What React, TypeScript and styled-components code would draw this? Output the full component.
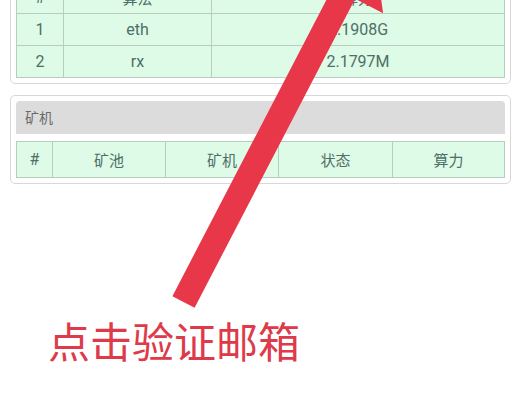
import React from "react";
import styled, { createGlobalStyle } from "styled-components";

const GlobalStyle = createGlobalStyle`
  html, body {
    margin: 0;
    padding: 0;
    background: #ffffff;
  }
  body {
    font-family: Roboto, "Noto Sans CJK SC", "Noto Sans", sans-serif;
  }
`;

const Page = styled.div`
  position: relative;
  width: 520px;
  height: 400px;
  overflow: hidden;
  background: #ffffff;
`;

const Card = styled.section<{ $offset: number }>`
  box-sizing: border-box;
  width: 501px;
  margin: ${(p) => p.$offset}px 9px 0 10px;
  border: 1px solid #d8d8d8;
  border-radius: 5px;
  padding: 5px;
  background: #ffffff;
  display: flex;
  flex-direction: column;
  gap: 7px;
`;

const CardHeader = styled.div`
  height: 33px;
  line-height: 33px;
  padding-left: 9px;
  background: #dcdcdc;
  border-radius: 4px 4px 0 0;
  font-family: "Noto Sans CJK SC", sans-serif;
  font-size: 14px;
  color: #6a6a6a;
`;

const Table = styled.table`
  width: 100%;
  border-collapse: collapse;
  table-layout: fixed;
  background: #ddfbe6;
`;

const Row = styled.tr<{ $h: number }>`
  height: ${(p) => p.$h}px;
`;

const Cell = styled.td<{ $cjk?: boolean }>`
  border: 1px solid #b9cdbf;
  padding: 0;
  text-align: center;
  vertical-align: middle;
  color: #4e6f67;
  font-family: ${(p) =>
    p.$cjk ? `"Noto Sans CJK SC", sans-serif` : `Roboto, "Noto Sans CJK SC", sans-serif`};
  font-size: ${(p) => (p.$cjk ? 15 : 16)}px;
  font-weight: 400;
`;

const Caption = styled.div`
  margin: 135px 0 0 48px;
  font-family: "Noto Sans CJK SC", sans-serif;
  font-size: 42px;
  line-height: 42px;
  color: #de3a49;
  white-space: nowrap;
`;

const ArrowLayer = styled.svg`
  position: absolute;
  left: 0;
  top: 0;
  width: 520px;
  height: 400px;
  pointer-events: none;
`;

const algos = [
  { id: "1", name: "eth", rate: "2.1908G" },
  { id: "2", name: "rx", rate: "2.1797M" },
];

export default function App() {
  return (
    <>
      <GlobalStyle />
      <Page>
        <Card $offset={-65}>
          <CardHeader>算法</CardHeader>
          <Table>
            <colgroup>
              <col style={{ width: 47 }} />
              <col style={{ width: 148 }} />
              <col />
            </colgroup>
            <tbody>
              <Row $h={32}>
                <Cell>#</Cell>
                <Cell $cjk>算法</Cell>
                <Cell $cjk>算力</Cell>
              </Row>
              {algos.map((a) => (
                <Row $h={32} key={a.id}>
                  <Cell>{a.id}</Cell>
                  <Cell>{a.name}</Cell>
                  <Cell>{a.rate}</Cell>
                </Row>
              ))}
            </tbody>
          </Table>
        </Card>
        <Card $offset={11}>
          <CardHeader>矿机</CardHeader>
          <Table>
            <colgroup>
              <col style={{ width: 36 }} />
              <col style={{ width: 113 }} />
              <col style={{ width: 113 }} />
              <col style={{ width: 114 }} />
              <col />
            </colgroup>
            <tbody>
              <Row $h={36}>
                <Cell>#</Cell>
                <Cell $cjk>矿池</Cell>
                <Cell $cjk>矿机</Cell>
                <Cell $cjk>状态</Cell>
                <Cell $cjk>算力</Cell>
              </Row>
            </tbody>
          </Table>
        </Card>
        <Caption>点击验证邮箱</Caption>
        <ArrowLayer viewBox="0 0 520 400">
          <polygon
            points="172.4,296.2 194.6,307.8 355.2,-1.2 383.1,13.3 372.7,-62 305.1,-27.3 333,-12.8"
            fill="#e9374a"
          />
        </ArrowLayer>
      </Page>
    </>
  );
}
